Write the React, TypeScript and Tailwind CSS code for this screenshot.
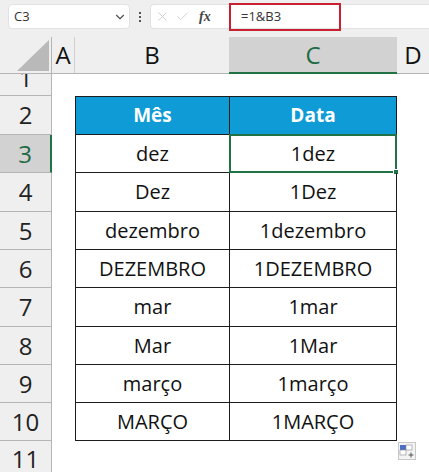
import React from 'react';
import { ChevronDown, X, Check } from 'lucide-react';

const FONT = "font-['Open_Sans','Noto_Sans',sans-serif]";

const ROWS: [number, number, string, string][] = [
  [3, 38, 'dez', '1dez'],
  [4, 39, 'Dez', '1Dez'],
  [5, 38, 'dezembro', '1dezembro'],
  [6, 38, 'DEZEMBRO', '1DEZEMBRO'],
  [7, 39, 'mar', '1mar'],
  [8, 38, 'Mar', '1Mar'],
  [9, 38, 'março', '1março'],
  [10, 38, 'MARÇO', '1MARÇO'],
];

const RowHead = ({ n, h, active }: { n: number; h: number; active?: boolean }) => (
  <div
    style={{ height: h }}
    className={`w-[52px] shrink-0 flex items-center justify-center border-r border-b border-[#b5b5b5] text-[24px] ${
      active ? 'bg-[#d2d2d2] text-[#1e6b45] border-r-[#217346] border-r-2' : 'bg-[#efefef] text-[#222]'
    }`}
  >
    {n}
  </div>
);

export default function App() {
  return (
    <div className={`w-[429px] h-[472px] overflow-hidden bg-white flex flex-col ${FONT}`}>
      {/* formula bar */}
      <div className="h-[37px] shrink-0 bg-[#efefef] flex pt-[4px] pl-[8px]">
        <div className="w-[122px] h-[25px] bg-white rounded-[4px] border border-[#e2e2e2] flex items-center justify-between pl-[5px] pr-[2px] text-[13px] text-[#333]">
          C3
          <ChevronDown className="w-[14px] h-[14px] text-[#555]" />
        </div>
        <div className="w-[20px] h-[25px] flex flex-col items-center justify-center gap-[2px]">
          <div className="w-[2px] h-[2px] bg-[#555]" />
          <div className="w-[2px] h-[2px] bg-[#555]" />
          <div className="w-[2px] h-[2px] bg-[#555]" />
        </div>
        <div className="flex-1 h-[25px] bg-white rounded-l-[4px] border-l border-t border-b border-[#e2e2e2] flex items-center pl-[4px]">
          <X className="w-[15px] h-[15px] text-[#c4c4c4]" strokeWidth={1.25} />
          <Check className="w-[15px] h-[15px] ml-[5px] text-[#c4c4c4]" strokeWidth={1.25} />
          <span className="ml-[9px] text-[14px] italic font-bold text-[#444] font-['Liberation_Serif',serif] w-[14px]">fx</span>
          <div className="ml-[16px] w-[112px] h-[28px] shrink-0 border-[2px] border-[#c8202f] flex items-center pl-[10px] text-[13px] text-[#333]">
            =1&amp;B3
          </div>
        </div>
      </div>

      {/* column headers */}
      <div className="h-[37px] shrink-0 flex bg-[#efefef] border-b border-[#b5b5b5] text-[24px] text-[#111]">
        <div className="relative w-[52px] shrink-0 border-r border-[#b5b5b5]">
          <svg className="absolute left-[17px] top-[3px]" width="32" height="31" viewBox="0 0 32 31">
            <polygon points="32,0 32,31 0,31" fill="#b9b9b9" />
          </svg>
        </div>
        <div className="w-[23px] shrink-0 flex items-center justify-center border-r border-[#d0d0d0]">A</div>
        <div className="w-[154px] shrink-0 flex items-center justify-center">B</div>
        <div className="w-[168px] shrink-0 flex items-center justify-center bg-[#d2d2d2] text-[#1e6b45] border-b-2 border-[#217346] -mb-px">C</div>
        <div className="flex-1 flex items-center justify-center">D</div>
      </div>

      {/* sheet */}
      <div className="flex-1 flex flex-col">
        <div className="flex h-[22px] shrink-0">
          <div className="w-[52px] shrink-0 h-full overflow-hidden flex items-end justify-center border-r border-b border-[#b5b5b5] bg-[#efefef] text-[24px] leading-[34px] text-[#222]">
            1
          </div>
        </div>

        <div className="flex h-[39px] shrink-0">
          <RowHead n={2} h={39} />
          <div className="ml-[23px] w-[154px] flex items-center justify-center bg-[#0e9bd6] border border-[#1c1c1c] border-r-0 text-white font-bold text-[19px]">
            Mês
          </div>
          <div className="w-[168px] flex items-center justify-center bg-[#0e9bd6] border border-[#1c1c1c] text-white font-bold text-[19px]">
            Data
          </div>
        </div>

        {ROWS.map(([n, h, a, b]) => (
          <div key={n} className="flex shrink-0" style={{ height: h }}>
            <RowHead n={n} h={h} active={n === 3} />
            <div className="ml-[23px] w-[154px] flex items-center justify-center border-l border-b border-[#1c1c1c] text-[20px] text-[#111]">
              {a}
            </div>
            <div
              className={`relative w-[168px] flex items-center justify-center text-[20px] text-[#111] ${
                n === 3
                  ? 'border-[2px] border-[#217346] -mt-px'
                  : 'border-l border-r border-b border-[#1c1c1c]'
              }`}
            >
              {b}
              {n === 3 && (
                <div className="absolute right-[-4px] bottom-[-4px] w-[6px] h-[6px] bg-[#217346] border border-white" />
              )}
              {n === 10 && (
                <svg className="absolute right-[-20px] bottom-[-20px]" width="18" height="18" viewBox="0 0 18 18">
                  <rect x="0.5" y="0.5" width="17" height="17" fill="#f4f4f4" stroke="#c8c8c8" />
                  <rect x="2" y="3" width="6" height="5" fill="#4f6fc4" />
                  <rect x="8" y="3" width="6" height="5" fill="#fff" stroke="#8a8a8a" strokeWidth="0.6" />
                  <rect x="2" y="8" width="6" height="5" fill="#fff" stroke="#8a8a8a" strokeWidth="0.6" />
                  <path d="M13 10.5v5M10.5 13h5" stroke="#555" strokeWidth="1" />
                </svg>
              )}
            </div>
          </div>
        ))}

        <div className="flex flex-1 min-h-0">
          <div className="w-[52px] shrink-0 flex items-center justify-center pt-[4px] border-r border-[#b5b5b5] bg-[#efefef] text-[24px] leading-none text-[#222]">
            11
          </div>
        </div>
      </div>
    </div>
  );
}
